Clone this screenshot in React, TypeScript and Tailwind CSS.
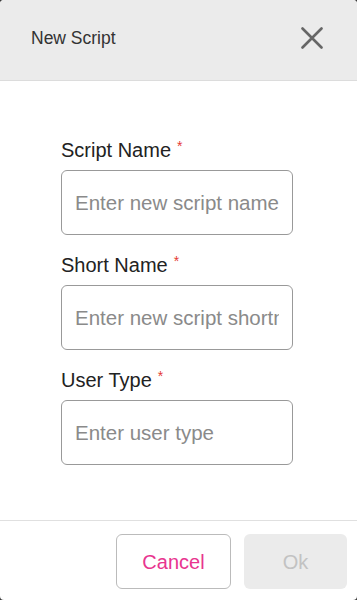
const fields = [
  { label: "Script Name", placeholder: "Enter new script name" },
  { label: "Short Name", placeholder: "Enter new script shortname" },
  { label: "User Type", placeholder: "Enter user type" },
];

export default function App() {
  return (
    <div
      className="w-[357px] h-[600px] bg-[#3a3a3a] overflow-hidden"
      style={{ fontFamily: '"Liberation Sans", Arial, sans-serif' }}
    >
      <div className="h-full bg-white rounded-[4px] overflow-hidden flex flex-col">
        {/* HEADER */}
        <div className="h-[81px] shrink-0 bg-[#ebebeb] border-b border-[#dcdcdc] flex items-center justify-between pl-[31px] pr-[34px] pb-[4px]">
          <span className="text-[17.5px] text-[#333]">New Script</span>
          <svg width="22" height="22" viewBox="0 0 22 22" className="text-[#666]">
            <path
              d="M1.5 1.5 L20.5 20.5 M20.5 1.5 L1.5 20.5"
              stroke="currentColor"
              strokeWidth="2.6"
              strokeLinecap="round"
            />
          </svg>
        </div>

        {/* FORM */}
        <div className="flex-1 px-[61px] pt-[57px] flex flex-col gap-[18px]">
          {fields.map((f) => (
            <div key={f.label} className="flex flex-col">
              <label className="text-[20px] leading-[24px] text-[#222] mb-[8px] flex items-start">
                {f.label}
                <span className="text-[#e53935] text-[14px] leading-[14px] ml-[6px] mt-[1px]">
                  *
                </span>
              </label>
              <input
                placeholder={f.placeholder}
                className="w-[232px] h-[65px] border border-[#999] rounded-[6px] px-[13px] text-[20.5px] text-[#333] placeholder:text-[#8a8a8a] outline-none"
              />
            </div>
          ))}
        </div>

        {/* FOOTER */}
        <div className="h-[80px] shrink-0 border-t border-[#e0e0e0] flex items-start justify-end gap-[13px] pr-[10px] pt-[13px]">
          <button className="w-[115px] h-[55px] border border-[#bbb] rounded-[6px] text-[20px] text-[#e8358f] bg-white">
            Cancel
          </button>
          <button className="w-[103px] h-[55px] rounded-[6px] text-[20px] text-[#c2c2c2] bg-[#ebebeb]">
            Ok
          </button>
        </div>
      </div>
    </div>
  );
}
